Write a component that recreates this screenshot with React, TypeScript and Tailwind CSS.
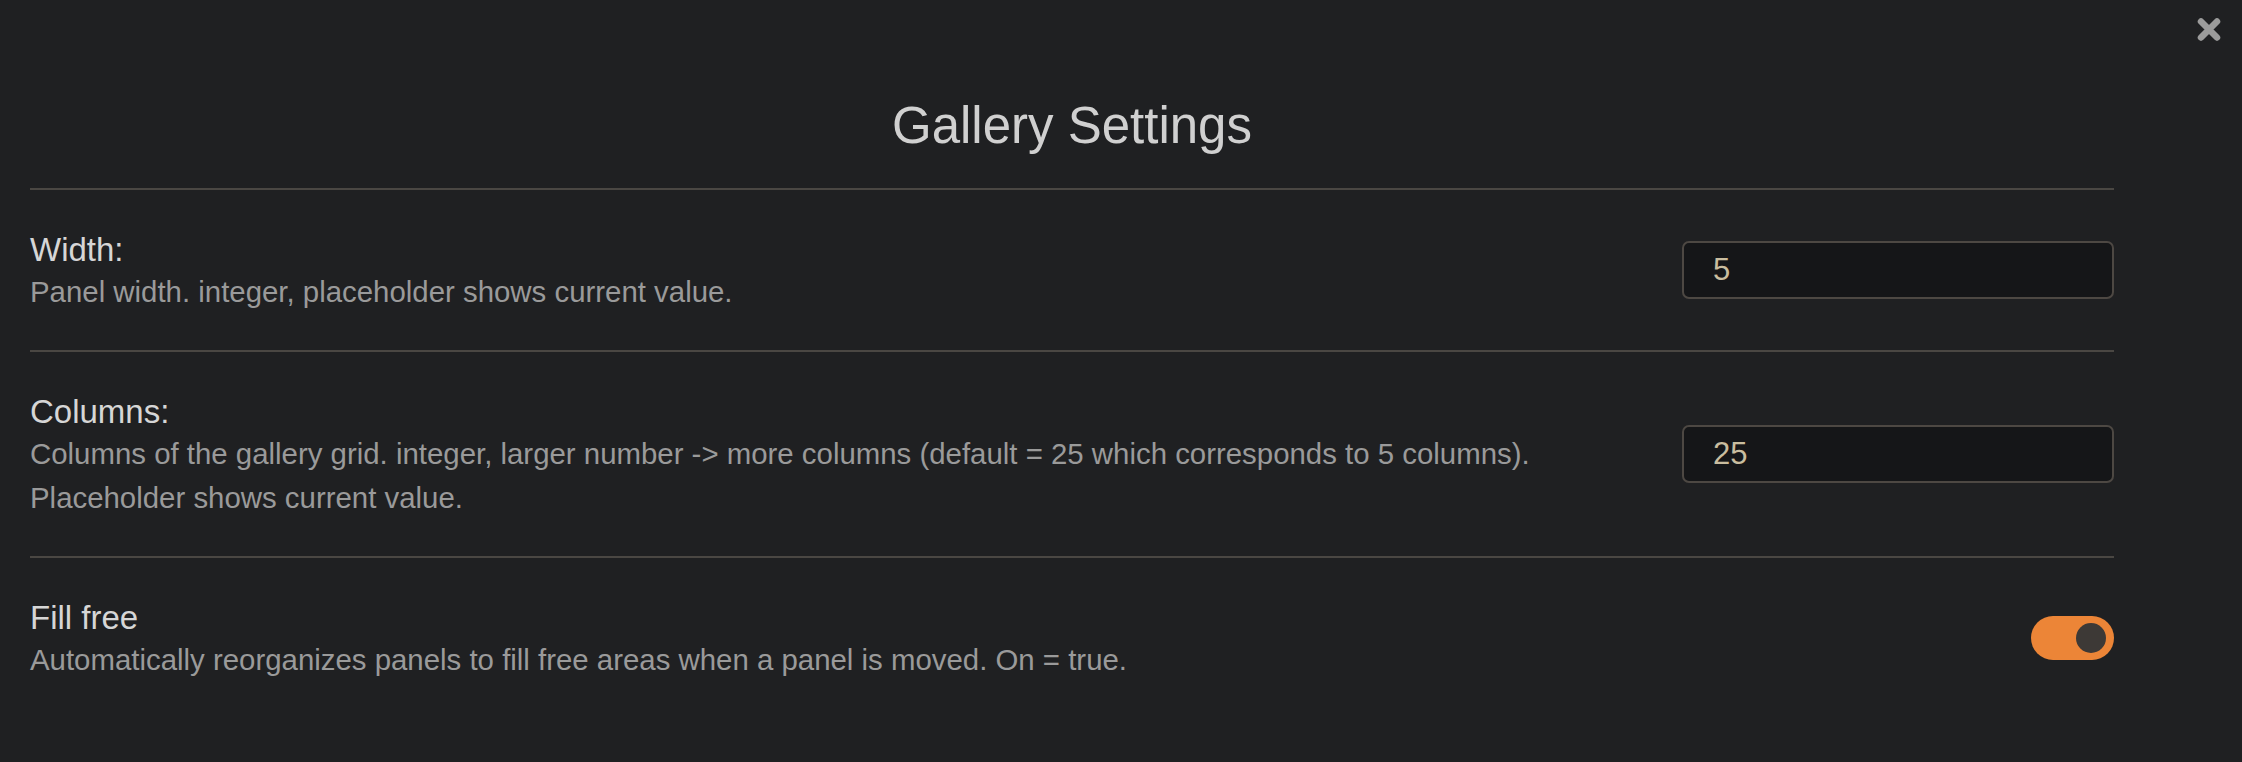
import React, { useState } from 'react';

const font = "font-['Liberation_Sans',_Arial,_sans-serif]";

interface SettingRowProps {
  label: string;
  children: React.ReactNode;
  control: React.ReactNode;
  last?: boolean;
}

const SettingRow: React.FC<SettingRowProps> = ({ label, children, control, last }) => (
  <div
    className={`flex items-center justify-between gap-8 pt-[40px] pb-[36px] ${
      last ? '' : 'border-b-2 border-[#4a4743]'
    }`}
  >
    <div className="flex flex-col">
      <div className="text-[33px] leading-[40px] text-[#d6d6d6]">{label}</div>
      <div className="text-[29.4px] leading-[44px] text-[#9a9a9a]">{children}</div>
    </div>
    <div className="shrink-0 mb-[4px]">{control}</div>
  </div>
);

const NumberInput: React.FC<{ value: string }> = ({ value }) => {
  const [val, setVal] = useState(value);
  return (
    <input
      type="text"
      value={val}
      onChange={(e) => setVal(e.target.value)}
      className={`${font} w-[432px] h-[58px] rounded-[7px] border-2 border-[#4d4843] bg-[#151618] pl-[29px] pr-4 text-[31px] text-[#c9bd9f] outline-none`}
    />
  );
};

const Toggle: React.FC = () => {
  const [on, setOn] = useState(true);
  return (
    <button
      onClick={() => setOn(!on)}
      className={`flex h-[44px] w-[83px] items-center rounded-full px-[8px] ${
        on ? 'justify-end bg-[#ec8537]' : 'justify-start bg-[#4a4743]'
      }`}
    >
      <span className="block h-[30px] w-[30px] rounded-full bg-[#3d3936]" />
    </button>
  );
};

export default function App() {
  return (
    <div className={`${font} relative min-h-screen w-full bg-[#1f2022]`}>
      <button className="absolute top-[17px] right-[21px] h-[25px] w-[24px]">
        <svg viewBox="0 0 24 25" className="h-full w-full">
          <path
            d="M4 4.5 L20 20.5 M20 4.5 L4 20.5"
            stroke="#9b9b9b"
            strokeWidth="6.5"
            strokeLinecap="round"
            fill="none"
          />
        </svg>
      </button>

      <div className="ml-[30px] w-[2084px] pt-[96px]">
        <h1 className="border-b-2 border-[#4a4743] pb-[32px] text-center text-[51px] leading-[60px] text-[#d0d0d0]">
          Gallery Settings
        </h1>

        <SettingRow label="Width:" control={<NumberInput value="5" />}>
          Panel width. integer, placeholder shows current value.
        </SettingRow>

        <SettingRow label="Columns:" control={<NumberInput value="25" />}>
          Columns of the gallery grid. integer, larger number -&gt; more columns (default = 25 which corresponds to 5 columns).
          <br />
          Placeholder shows current value.
        </SettingRow>

        <SettingRow label="Fill free" control={<Toggle />} last>
          Automatically reorganizes panels to fill free areas when a panel is moved. On = true.
        </SettingRow>
      </div>
    </div>
  );
}
